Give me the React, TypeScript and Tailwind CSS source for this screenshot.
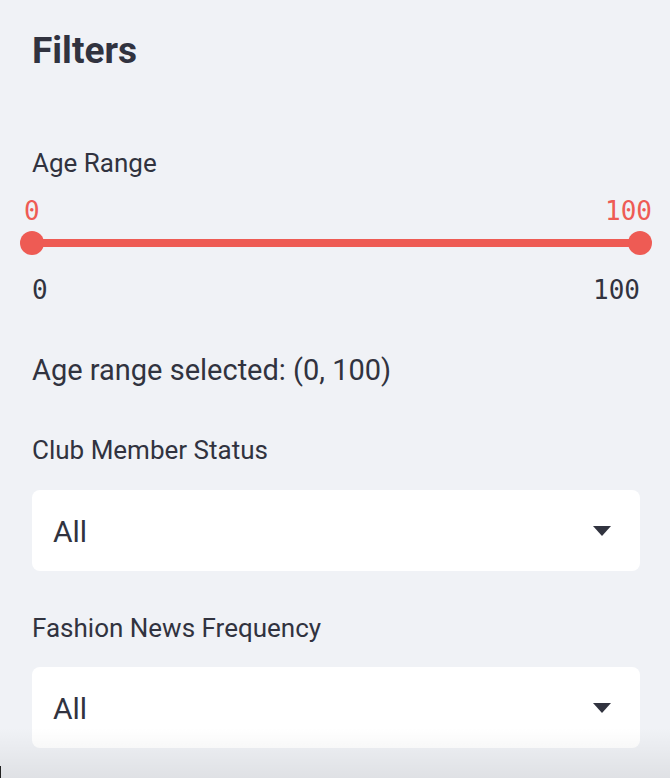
import React from "react";

const sans = "font-['Roboto','Liberation_Sans',sans-serif]";
const mono = "font-['DejaVu_Sans_Mono','Liberation_Mono',monospace]";

function Caret() {
  return (
    <svg width="18" height="10" viewBox="0 0 18 10" className="shrink-0">
      <path d="M0 0 H18 L9 10 Z" fill="#31333f" />
    </svg>
  );
}

function SelectBox({ value }: { value: string }) {
  return (
    <div className="flex h-[81px] items-center justify-between rounded-[8px] bg-white pl-[21px] pr-[29px]">
      <span className={`${sans} text-[30px] leading-[40px] pt-[3px] text-[#31333f]`}>{value}</span>
      <Caret />
    </div>
  );
}

export default function App() {
  return (
    <div className={`relative h-[778px] w-[670px] overflow-hidden bg-[#f0f2f6] ${sans} text-[#31333f]`}>
      <div className="flex flex-col pl-[32px] pr-[30px] pt-[29px]">
        <h2 className="text-[37px] font-bold leading-[44px]">Filters</h2>

        <div className="mt-[74px] text-[26px] leading-[32px]">Age Range</div>

        <div className="mt-[19px] flex flex-col">
          <div className={`${mono} -ml-[8px] -mr-[12px] flex justify-between text-[26px] leading-[26px] text-[#ee5b54]`}>
            <span>0</span>
            <span>100</span>
          </div>
          <div className="relative mt-[7px] h-[24px]">
            <div className="absolute left-0 right-0 top-[8px] h-[8px] bg-[#ee5b54]" />
            <div className="absolute -left-[12px] top-0 h-[24px] w-[24px] rounded-full bg-[#ee5b54]" />
            <div className="absolute -right-[12px] top-0 h-[24px] w-[24px] rounded-full bg-[#ee5b54]" />
          </div>
          <div className={`${mono} mt-[22px] flex justify-between text-[26px] leading-[26px] text-[#31333f]`}>
            <span>0</span>
            <span>100</span>
          </div>
        </div>

        <p className="mt-[47px] text-[29px] leading-[40px]">Age range selected: (0, 100)</p>

        <div className="mt-[44px] text-[26px] leading-[32px]">Club Member Status</div>
        <div className="mt-[24px]">
          <SelectBox value="All" />
        </div>

        <div className="mt-[41px] text-[26px] leading-[32px]">Fashion News Frequency</div>
        <div className="mt-[23px]">
          <SelectBox value="All" />
        </div>
      </div>

      <div className="pointer-events-none absolute bottom-0 left-0 right-0 h-[50px] bg-gradient-to-b from-transparent to-[rgba(0,0,0,0.07)]" />
      <div className="pointer-events-none absolute bottom-0 left-0 h-[12px] w-[1px] bg-[#222]" />
    </div>
  );
}
